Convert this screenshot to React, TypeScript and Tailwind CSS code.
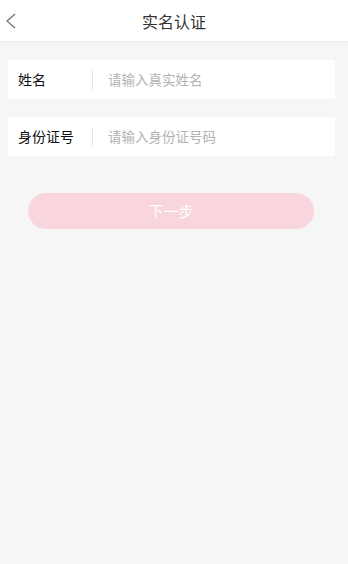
import React from "react";

export default function App() {
  const font = { fontFamily: '"Noto Sans CJK SC", "Noto Sans", sans-serif' };
  return (
    <div className="w-[348px] h-[564px] bg-[#f6f6f6] flex flex-col" style={font}>
      <div className="h-[41px] bg-white flex items-center relative shrink-0">
        <svg className="absolute left-[5px] top-[13px]" width="12" height="16" viewBox="0 0 12 16">
          <path d="M10 1 L2 8 L10 15" fill="none" stroke="#666" strokeWidth="1.1" />
        </svg>
        <div className="w-full text-center text-[16px] text-[#333] leading-none">实名认证</div>
      </div>
      <div className="h-[2px] bg-[#f3eef0] shrink-0" />
      <div className="mt-[17px] mx-[8px] w-[327px] h-[39px] bg-white flex items-center">
        <div className="w-[84px] pl-[10px] text-[14px] text-[#111]">姓名</div>
        <div className="w-px h-[20px] bg-[#e8e8e8]" />
        <div className="pl-[15px] text-[13.5px] text-[#b3b3b3]">请输入真实姓名</div>
      </div>
      <div className="mt-[18px] mx-[8px] w-[327px] h-[39px] bg-white flex items-center">
        <div className="w-[84px] pl-[10px] text-[14px] text-[#111]">身份证号</div>
        <div className="w-px h-[20px] bg-[#e8e8e8]" />
        <div className="pl-[15px] text-[13.5px] text-[#b3b3b3]">请输入身份证号码</div>
      </div>
      <div className="mt-[37px] ml-[28px] w-[286px] h-[36px] rounded-full bg-[#f9d5dd] flex items-center justify-center text-white text-[15px]">
        下一步
      </div>
    </div>
  );
}
